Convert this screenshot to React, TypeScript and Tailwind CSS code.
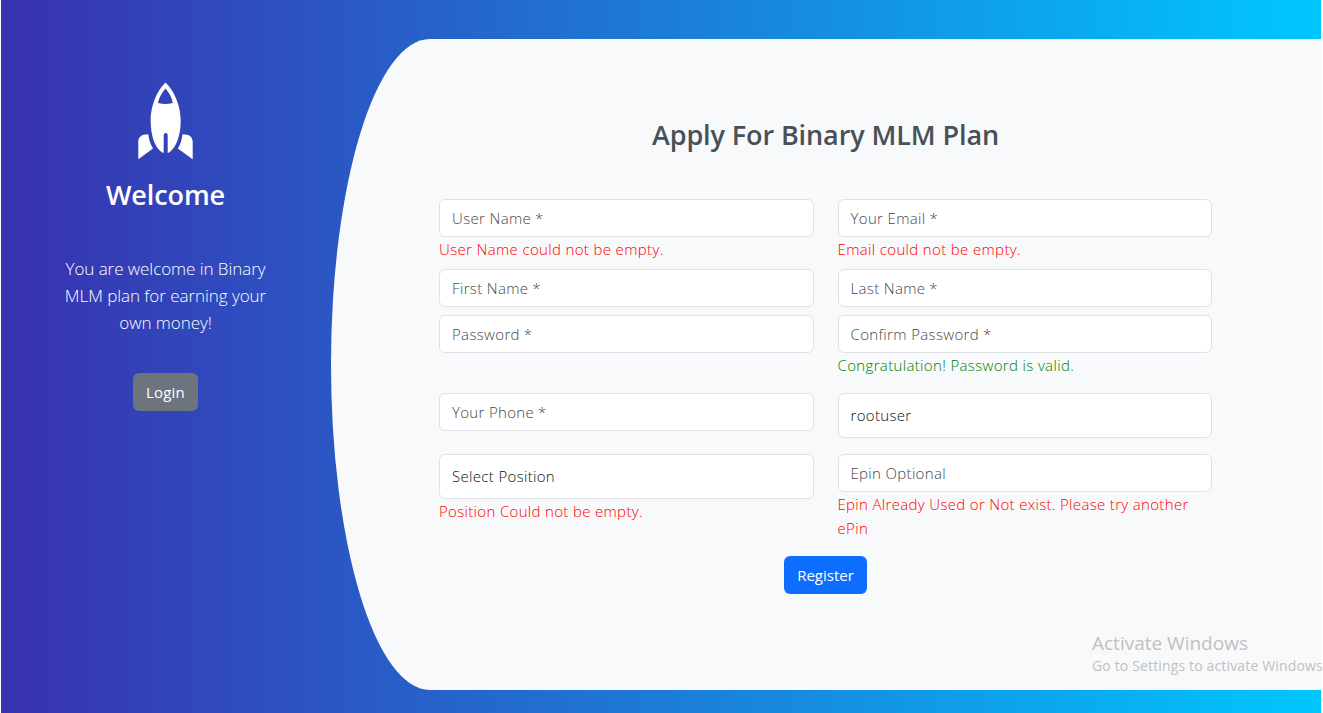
import React from "react";

type FieldProps = {
  label: string;
  required?: boolean;
  filled?: boolean;
  tall?: boolean;
  message?: string;
  valid?: boolean;
};

function Field({ label, required, filled, tall, message, valid }: FieldProps) {
  return (
    <div>
      <div
        className={`flex items-center rounded-md border border-[#dee2e6] bg-white px-3 ${tall ? "h-[45px] pb-px" : "h-[38px]"} ${filled ? "text-[#0c0f12]" : "text-[#43484d]"}`}
      >
        <span>
          {label}
          {required && <span className="tracking-normal"> *</span>}
        </span>
      </div>
      {message && <p className={valid ? "text-[#008000]" : "text-[#ff0000]"}>{message}</p>}
    </div>
  );
}

function Rocket() {
  return (
    <svg width="56" height="80" viewBox="0.5 0 56 80" fill="#fff" className="block">
      <path
        fillRule="evenodd"
        d="M28 .5C34 6 43.200 20 43.200 39C43.200 53 39 64 33.500 69Q32 70.500 30.200 71V53.200Q30.200 51 28.200 51T26.200 53.200V71Q24.200 70.500 22.700 69C17 64 13.200 53 13.200 39C13.200 20 22 6 28 .5ZM28 6.500C24.500 10.500 21.500 15.500 20.500 21Q28 23 35.300 21C34.500 15.500 31.500 10.500 28 6.500Z"
      />
      <path d="M10.800 52.300C4 52.300 .8 55 .8 60V77.300L15.500 66.500C13 62.500 11.500 58 10.800 52.300Z" />
      <path d="M45 52.300C52 52.300 55.200 55 55.200 60V77.300L40.300 66.500C43 62.500 44.300 58 45 52.300Z" />
    </svg>
  );
}

export default function App() {
  return (
    <div className="relative h-[713px] w-[1323px] overflow-hidden bg-white px-px font-['Open_Sans','Noto_Sans',sans-serif] text-[15px] leading-6 font-light">
      <div className="flex h-full w-[1320px] bg-linear-[to_right,#3931af,#00c6ff]">
        <aside className="flex w-[330px] shrink-0 flex-col items-center pt-[82px] pr-px text-center text-white">
          <Rocket />
          <h1 className="mt-4 text-[27px] leading-[34px] font-semibold tracking-[-0.1px]">Welcome</h1>
          <p className="mt-[43px] w-[240px] text-[17px] leading-[27px] tracking-[-0.05px]">
            You are welcome in Binary
            <br />
            MLM plan for earning your
            <br />
            own money!
          </p>
          <button className="mt-[37px] h-[38px] w-[65px] rounded-md bg-[#6c757d] font-normal tracking-[0.2px]">Login</button>
        </aside>
        <main className="mt-[39px] h-[651px] w-[990px] rounded-l-[99px_325.5px] bg-[#f8f9fa] pt-[79px] pr-[109px] pl-[108px]">
          <h2 className="text-center text-[27px] leading-[34px] font-semibold tracking-[-0.1px] text-[#495057]">
            Apply For Binary MLM Plan
          </h2>
          <div className="mt-[47px] grid grid-cols-2 gap-x-6 gap-y-2 tracking-[0.35px]">
            <Field label="User Name" required message="User Name could not be empty." />
            <Field label="Your Email" required message="Email could not be empty." />
            <Field label="First Name" required />
            <Field label="Last Name" required />
            <Field label="Password" required />
            <Field label="Confirm Password" required message="Congratulation! Password is valid." valid />
          </div>
          <div className="mt-4 grid grid-cols-2 gap-x-6 gap-y-4 tracking-[0.33px]">
            <Field label="Your Phone" required />
            <Field label="rootuser" filled tall />
            <Field label="Select Position" filled tall message="Position Could not be empty." />
            <Field label="Epin Optional" message="Epin Already Used or Not exist. Please try another ePin" />
          </div>
          <button className="mx-auto mt-4 block h-[38px] w-[83px] rounded-md bg-[#0d6efd] font-normal text-white">
            Register
          </button>
        </main>
      </div>
      <div className="absolute top-[630px] left-[1092px] whitespace-nowrap text-[#bfc1c2]">
        <p className="text-[19px] leading-[26px] font-normal">Activate Windows</p>
        <p className="text-[14px] leading-[19px] font-normal tracking-[0.15px]">Go to Settings to activate Windows</p>
      </div>
    </div>
  );
}
